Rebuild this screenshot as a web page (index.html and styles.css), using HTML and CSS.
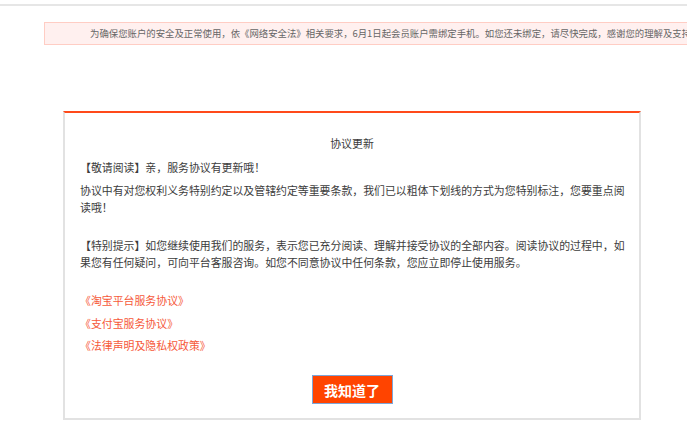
FILE: index.html
```html
<!DOCTYPE html>
<html lang="zh-CN">
<head>
    <meta charset="UTF-8">
    <meta name="viewport" content="width=device-width, initial-scale=1.0">
    <title>协议更新</title>
    <link rel="stylesheet" href="styles.css">
</head>
<body>
    <div class="top-line"></div>

    <!-- Phone binding notice -->
    <div class="notice">
        为确保您账户的安全及正常使用，依《网络安全法》相关要求，6月1日起会员账户需绑定手机。如您还未绑定，请尽快完成，感谢您的理解及支持！
    </div>

    <!-- Agreement update dialog -->
    <div class="dialog">
        <h3 class="dialog-title">协议更新</h3>
        <p class="greet">【敬请阅读】亲，服务协议有更新哦！</p>
        <p class="para">协议中有对您权利义务特别约定以及管辖约定等重要条款，我们已以粗体下划线的方式为您特别标注，您要重点阅<br>读哦！</p>
        <p class="para tip">【特别提示】如您继续使用我们的服务，表示您已充分阅读、理解并接受协议的全部内容。阅读协议的过程中，如<br>果您有任何疑问，可向平台客服咨询。如您不同意协议中任何条款，您应立即停止使用服务。</p>
        <div class="links">
            <a href="#">《淘宝平台服务协议》</a>
            <a href="#">《支付宝服务协议》</a>
            <a href="#">《法律声明及隐私权政策》</a>
        </div>
        <div class="actions">
            <button type="button" class="btn-ok">我知道了</button>
        </div>
    </div>
</body>
</html>
```

FILE: styles.css
```css
body {
    margin: 0;
    padding: 0;
    background-color: #fff;
    font-family: "Noto Sans CJK SC", "Noto Sans", sans-serif;
    color: #3c3c3c;
    overflow: hidden;
}

.top-line {
    height: 2px;
    margin-top: 4px;
    background-color: #e6e6e6;
}

/* Notice banner, runs off the right edge like the original */
.notice {
    margin: 16px 0 0 44px;
    width: 700px;
    height: 21px;
    padding-left: 45px;
    border: 1px solid #ffcdc4;
    background-color: #fff0ef;
    color: #666;
    font-size: 9.4px;
    line-height: 21px;
    white-space: nowrap;
    overflow: hidden;
}

.dialog {
    width: 574px;
    margin: 66px 0 0 63px;
    padding: 22px 0 14px 0;
    border: 2px solid #e2e2e2;
    border-top: 2px solid #ff4a1a;
    font-size: 10.9px;
    line-height: 17px;
}

.dialog-title {
    margin: 0 0 7px;
    font-size: 10.9px;
    font-weight: normal;
    text-align: center;
}

.dialog p {
    margin: 0 10px 0 15px;
    white-space: nowrap;
}

.greet {
    padding-bottom: 6px;
}

.para {
    padding-bottom: 21px;
}

.para.tip {
    padding-bottom: 18px;
}

.links {
    margin-left: 15px;
}

.links a {
    display: block;
    line-height: 22.5px;
    color: #f6593a;
    text-decoration: none;
}

.actions {
    margin-top: 18.5px;
    text-align: center;
}

.btn-ok {
    width: 81px;
    height: 29px;
    padding: 0;
    border: 1px solid #7ca5d8;
    background-color: #ff4400;
    color: #fff;
    font-family: inherit;
    font-size: 14px;
    font-weight: bold;
    cursor: pointer;
}
```
